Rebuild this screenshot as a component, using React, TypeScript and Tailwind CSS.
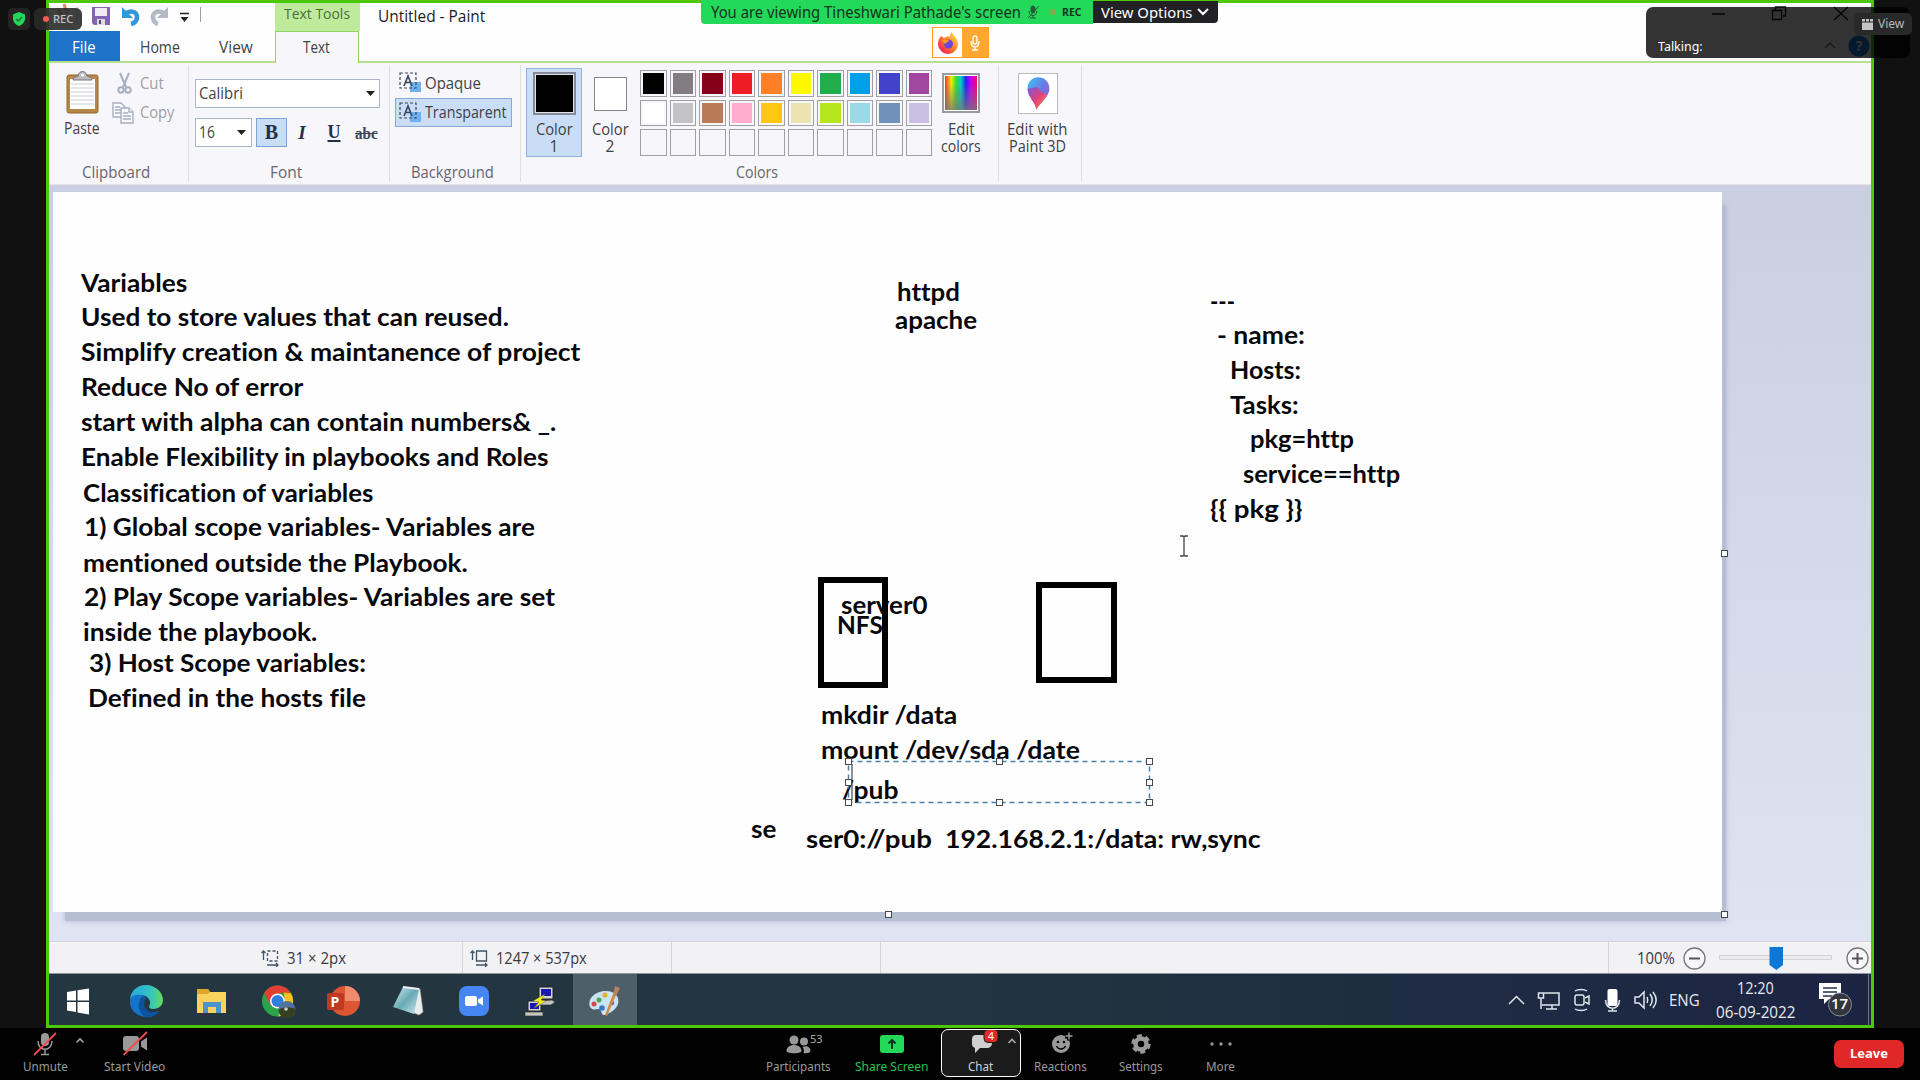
import React, { useLayoutEffect, useRef } from "react";

/* Text set to an exact width: the natural width is measured and scaled horizontally. */
function Fit({ w, className = "", inner = "", children }: { w: number; className?: string; inner?: string; children: React.ReactNode }) {
  const ref = useRef<HTMLSpanElement>(null);
  useLayoutEffect(() => {
    const el = ref.current;
    if (el) el.style.transform = `scaleX(${w / el.offsetWidth})`;
  }, [w]);
  return (
    <span className={`block shrink-0 ${className}`} style={{ width: w }}>
      <span ref={ref} className={`inline-block origin-left whitespace-pre ${inner}`}>
        {children}
      </span>
    </span>
  );
}

/* Canvas texts: left edge, right edge, baseline, content. */
const notes: [number, number, number, string][] = [
  [81, 187, 292, "Variables"],
  [81, 509, 326, "Used to store values that can reused."],
  [81, 580, 361, "Simplify creation & maintanence of project"],
  [81, 303, 396, "Reduce No of error"],
  [81, 556, 431, "start with alpha can contain numbers& _."],
  [81, 548, 466, "Enable Flexibility in playbooks and Roles"],
  [83, 374, 502, "Classification of variables"],
  [84, 535, 536, "1) Global scope variables- Variables are"],
  [83, 468, 572, "mentioned outside the Playbook."],
  [84, 555, 606, "2) Play Scope variables- Variables are set"],
  [83, 317, 641, "inside the playbook."],
  [89, 366, 672, "3) Host Scope variables:"],
  [88, 366, 707, "Defined in the hosts file"],
  [897, 960, 301, "httpd"],
  [895, 977, 329, "apache"],
  [1210, 1235, 310, "---"],
  [1217, 1305, 344, "- name:"],
  [1230, 1301, 379, "Hosts:"],
  [1230, 1299, 414, "Tasks:"],
  [1250, 1354, 448, "pkg=http"],
  [1243, 1400, 483, "service==http"],
  [1210, 1303, 518, "{{ pkg }}"],
  [841, 928, 614, "server0"],
  [837, 883, 634, "NFS"],
  [821, 957, 724, "mkdir /data"],
  [821, 1080, 759, "mount /dev/sda /date"],
  [842, 898, 799, "/pub"],
  [751, 776, 838, "se"],
  [806, 932, 848, "ser0://pub"],
  [945, 1261, 848, "192.168.2.1:/data: rw,sync"],
];

const handles: [number, number][] = [
  [848, 761], [999, 761], [1149, 761], [848, 782], [1149, 782], [848, 802], [999, 802], [1149, 802],
  [1724, 553], [1724, 914], [888, 914],
];

const palette = [
  "#000000", "#827d82", "#87001a", "#ee1c24", "#ff7f27", "#fbf800", "#22ad4c", "#00a0e8", "#4143cc", "#a2479f",
  "#ffffff", "#c3c2c5", "#b97a57", "#ffadca", "#ffc710", "#ece4b0", "#b5e61d", "#9adae6", "#7092ba", "#c9bfe5",
  "", "", "", "", "", "", "", "", "", "",
];

function TitleBar() {
  return (
    <div className="flex h-[28px] w-full items-start text-[#1c1c20]">
      <svg className="ml-[3px] h-7 w-[160px] shrink-0" viewBox="52 3 160 28">
        <path d="M64 4l3 10M58 9l4 6" stroke="#d98a66" strokeWidth="3" />
        <path d="M77 7v15M200.500 7v15" stroke="#a0a0a4" />
        <path d="M92 7h18v18H94l-2-2z" fill="#8263b4" />
        <path d="M95 8h12v8H95z" fill="#f0ebf5" />
        <path d="M97 19h8v6h-8z" fill="#ddd" />
        <path d="M99 20h2v4h-2z" fill="#54427c" />
        <path d="M126 13c6-3 11-1 11 4 0 4-2 6-6 7" fill="none" stroke="#3098d8" strokeWidth="4.500" />
        <path d="M122 7v11h11z" fill="#3098d8" />
        <path d="M164 13c-6-3-11-1-11 4 0 4 2 6 5 7" fill="none" stroke="#b3bac6" strokeWidth="4.500" />
        <path d="M168 7v11h-11z" fill="#b3bac6" />
        <path d="M180 13.500h9" stroke="#222" strokeWidth="1.500" />
        <path d="M180.500 17h8l-4 5z" fill="#222" />
      </svg>
      <div className="ml-[63px] flex h-7 w-[85px] bg-[#bfe99b]">
        <Fit w={66} className="ml-[9px] text-[15px] leading-[21px] text-[#4b7038]">Text Tools</Fit>
      </div>
      <Fit w={107} className="ml-[18px] text-[16px] leading-[26px]">Untitled - Paint</Fit>
      <svg className="ml-[1225px] h-5 w-[142px] shrink-0" viewBox="1710 3 142 20" fill="none" stroke="#111" strokeWidth="1.300">
        <path d="M1712 14h13M1834 7l14 13m0-13l-14 13M1772.500 10.500h9v9h-9zM1775.500 10V7h10v9h-3" />
      </svg>
    </div>
  );
}

function Tabs() {
  return (
    <div className="flex h-[32px] w-full text-[15.500px] leading-[32px] text-[#404046]">
      <div className="flex w-[71px] border-b-2 border-[#b6e08f] bg-[#1c73c8] text-white">
        <Fit w={24} className="ml-[23px]">File</Fit>
      </div>
      <div className="flex w-[155px] border-b-2 border-[#b6e08f]">
        <Fit w={40} className="ml-[20px]">Home</Fit>
        <Fit w={34} className="ml-[39px]">View</Fit>
      </div>
      <div className="flex w-[84px] border-x border-t border-[#93d45f] bg-[#f7f6fa]">
        <Fit w={27} className="ml-[27px] -mt-px">Text</Fit>
      </div>
      <div className="flex flex-1 items-center border-b-2 border-[#b6e08f]">
        <svg className="ml-auto h-6 w-[48px]" viewBox="0 0 48 24">
          <path d="M2 14l5-5 5 5" stroke="#888" strokeWidth="1.500" fill="none" />
          <circle cx="36" cy="12" r="10.500" fill="#0d7fe4" />
          <text x="36" y="17" textAnchor="middle" fontSize="14" fontWeight="700" fill="#fff">?</text>
        </svg>
      </div>
    </div>
  );
}

function Group({ label, lw, className, children }: { label: string; lw: number; className: string; children: React.ReactNode }) {
  return (
    <div className={`my-[2px] flex shrink-0 flex-col border-r border-[#e0dfe4] ${className}`}>
      <div className="flex h-[99px]">{children}</div>
      <Fit w={lw} className="mx-auto -translate-x-[3px] text-[15.500px] leading-[19px] text-[#67666c]">{label}</Fit>
    </div>
  );
}

const Select = () => (
  <svg className="h-[22px] w-[22px] shrink-0" viewBox="0 0 22 22">
    <path d="M11 10h11v10H11z" fill="#6fb2f3" />
    <path d="M1 1h16v15H1z" fill="none" stroke="#39485c" strokeWidth="1.200" strokeDasharray="3 2" />
    <path d="M5 14l4-10 4 10M6.500 10.500h5" fill="none" stroke="#39485c" strokeWidth="1.600" />
  </svg>
);
const Arrow = () => <svg className="h-[5px] w-[9px] shrink-0" viewBox="0 0 9 5"><path d="M0 0h9L4.500 5z" fill="#222" /></svg>;

function Ribbon() {
  return (
    <div className="flex h-[122px] w-full border-b border-[#e4e3ea] bg-[#f7f6fa] text-[15.500px] leading-[17px] text-[#3f3f46]">
      <Group label="Clipboard" lw={68} className="w-[140px]">
        <div className="ml-[15px] w-[36px] pt-[6px]">
          <svg className="ml-[2px] h-[43px] w-[33px]" viewBox="0 0 33 43">
            <rect x="1" y="4" width="31" height="38" rx="2" fill="#b78649" stroke="#92672f" />
            <path d="M4 8h25v30H4z" fill="#fff" />
            <path d="M5 13h23M5 17h23M5 21h23M5 25h23M5 29h23M5 33h23" stroke="#c4cbd7" />
            <path d="M7 9c1-4 4-3 5-4 1-6 8-6 9 0 1 1 4 0 5 4z" fill="#bdbac0" stroke="#77747a" />
            <circle cx="16.500" cy="4" r="1.500" fill="#fff" />
          </svg>
          <Fit w={36} className="mt-[6px]">Paste</Fit>
        </div>
        <div className="ml-[12px] pt-[6px] text-[#a09fa5]">
          <div className="flex h-[24px] items-center">
            <svg className="h-[22px] w-[24px]" viewBox="0 0 24 22" fill="none" stroke="#a5afc0" strokeWidth="2">
              <path d="M8 1l6 14M17 1l-6 14" /><circle cx="9" cy="18" r="2.700" /><circle cx="16" cy="18" r="2.700" />
            </svg>
            <Fit w={24} className="ml-[4px]">Cut</Fit>
          </div>
          <div className="mt-[6px] flex h-[24px] items-center">
            <svg className="h-[22px] w-[24px]" viewBox="0 0 24 22" fill="#fbfbfd" stroke="#a5afc0" strokeWidth="1.400">
              <path d="M1 1h8l4 4v10H1z" /><path d="M3 5h5M3 8h8M3 11h8" />
              <path d="M9 6h8l4 4v11H9z" /><path d="M17 6v4h4M11 11h5M11 14h8M11 17h8" />
            </svg>
            <Fit w={34} className="ml-[4px] -mt-px">Copy</Fit>
          </div>
        </div>
      </Group>
      <Group label="Font" lw={32} className="w-[201px]">
        <div className="ml-[6px] pt-[14px]">
          <div className="flex h-[29px] w-[185px] items-center border border-[#abb4c8] bg-white">
            <Fit w={44} className="ml-[3px]">Calibri</Fit>
            <span className="ml-auto mr-[4px]"><Arrow /></span>
          </div>
          <div className="mt-[10px] flex">
            <div className="flex h-[29px] w-[57px] items-center border border-[#abb4c8] bg-white">
              <Fit w={16} className="ml-[3px]">16</Fit>
              <span className="ml-auto mr-[5px]"><Arrow /></span>
            </div>
            <div className="ml-[4px] grid h-[29px] w-[31px] place-items-center border border-[#7aa3d4] bg-[#c9ddf6] font-['Liberation_Serif'] text-[20px] font-bold text-[#243045]">B</div>
            <div className="grid w-[30px] place-items-center font-['Liberation_Serif'] text-[19px] font-bold italic text-[#243045]">I</div>
            <div className="grid w-[34px] place-items-center font-['Liberation_Serif'] text-[18px] font-bold text-[#243045] underline decoration-2 underline-offset-2">U</div>
            <Fit w={23} inner="line-through" className="ml-[4px] pt-[7px] font-['Liberation_Serif'] text-[17px] font-bold text-[#3e4656]">abc</Fit>
          </div>
        </div>
      </Group>
      <Group label="Background" lw={83} className="w-[131px]">
        <div className="ml-[5px] pt-[3px]">
          <div className="flex h-[30px] items-center pl-[4px]">
            <Select /><Fit w={56} className="ml-[4px]">Opaque</Fit>
          </div>
          <div className="flex h-[29px] w-[117px] items-center border border-[#86a9d6] bg-[#c9ddf6] pl-[3px]">
            <Select /><Fit w={82} className="ml-[4px] -mt-px">Transparent</Fit>
          </div>
        </div>
      </Group>
      <Group label="Colors" lw={42} className="w-[478px]">
        <div className="ml-[5px] mt-[3px] flex h-[89px] w-[56px] flex-col items-center border border-[#8fb3dc] bg-[#c9ddf6] pt-[3px]">
          <div className="h-[43px] w-[43px] border-2 border-[#858b97] bg-[#dfe5ee] p-px">
            <div className="h-full w-full bg-black" />
          </div>
          <Fit w={37} className="mt-[6px]">Color</Fit><span>1</span>
        </div>
        <div className="ml-[9px] flex w-[38px] flex-col items-center pt-[12px]">
          <div className="h-[34px] w-[33px] border border-[#85858a] bg-white" />
          <Fit w={37} className="mt-[10px]">Color</Fit><span>2</span>
        </div>
        <div className="ml-[11px] mt-[5px] grid h-[86px] w-[292px] grid-cols-10 gap-x-[3px] gap-y-[3px]">
          {palette.map((c, i) => (
            <div key={i} className="border border-[#a09fa4] p-[2px]">
              <div className="h-full w-full" style={{ backgroundColor: c }} />
            </div>
          ))}
        </div>
        <div className="ml-[8px] flex w-[42px] flex-col items-center pt-[8px]">
          <div className="h-[40px] w-[38px] border-2 border-[#9a9aa2] bg-white p-px">
            <div className="h-full w-full bg-[linear-gradient(to_bottom,transparent_20%,#777c),linear-gradient(to_right,#e33,#ee0_20%,#3d3_35%,#0cc_50%,#22e_65%,#b0f_80%,#f06)]" />
          </div>
          <Fit w={27} className="mt-[8px]">Edit</Fit><Fit w={40}>colors</Fit>
        </div>
      </Group>
      <div className="my-[2px] w-[83px] border-r border-[#e0dfe4]">
        <div className="flex w-[77px] flex-col items-center pt-[8px]">
          <svg className="h-[41px] w-[40px] border border-[#bbb] bg-white" viewBox="0 0 40 40">
            <defs>
              <linearGradient id="p3" x1="0" y1="0" x2="1" y2="1"><stop offset="0" stopColor="#39c6f5" /><stop offset=".5" stopColor="#6a78e4" /><stop offset="1" stopColor="#c34ac0" /></linearGradient>
              <linearGradient id="p4" x1="0" y1="0" x2="1" y2="1"><stop offset="0" stopColor="#7a5be0" /><stop offset=".5" stopColor="#e3407a" /><stop offset="1" stopColor="#f79a2f" /></linearGradient>
            </defs>
            <path d="M20 3c7 0 12 5 12 12 0 8-9 14-14 22 1-7-9-13-9-22 0-7 5-12 11-12z" fill="url(#p3)" />
            <path d="M9 15c6 0 9-4 13 1 2 4 5 5 8 5-3 6-9 11-12 16 0-7-9-13-9-22z" fill="url(#p4)" />
          </svg>
          <Fit w={61} className="mt-[7px]">Edit with</Fit><Fit w={57}>Paint 3D</Fit>
        </div>
      </div>
    </div>
  );
}

/* The drawing surface: everything on it sits at its own free position. */
function Workspace() {
  return (
    <div className="relative h-[756px] w-full overflow-hidden bg-gradient-to-b from-[#c9cfe0] to-[#dfe4f2]">
      <div className="absolute left-[16px] top-[20px] h-[716px] w-[1661px] bg-[#b5bed3] shadow-[0_0_5px_#b0b9d0]" />
      <div className="absolute left-[4px] top-[7px] h-[720px] w-[1669px] bg-[#fefefe]" />
      <div className="absolute -left-[49px] -top-[185px] h-[1000px] w-[1900px] font-[Lato] text-[25px] font-bold leading-[30px] text-[#08080c] [font-variant-ligatures:none]">
        {notes.map(([x, r, b, t]) => (
          <div key={t} className="absolute" style={{ left: x, top: b - 25 }}>
            <Fit w={r - x}>{t}</Fit>
          </div>
        ))}
        <div className="absolute left-[818px] top-[577px] h-[111px] w-[70px] border-[6px] border-black" />
        <div className="absolute left-[1036px] top-[582px] h-[101px] w-[81px] border-[6px] border-black" />
        <svg className="absolute left-[840px] top-[750px] h-[60px] w-[320px]" viewBox="840 750 320 60">
          <path d="M848.500 761.500h301v41h-301z" fill="none" stroke="#4a80a4" strokeWidth="1.500" strokeDasharray="5 4" />
          <path d="M852 764v36" stroke="#222" />
        </svg>
        {handles.map(([x, y]) => (
          <div key={`${x}-${y}`} className="absolute h-[7px] w-[7px] border border-[#45484f] bg-white" style={{ left: x - 3, top: y - 3 }} />
        ))}
        <svg className="absolute left-[1178px] top-[534px] h-[24px] w-[12px]" viewBox="0 0 12 24" fill="none" stroke="#444" strokeWidth="1.300">
          <path d="M2 2h3l1 1 1-1h3M2 22h3l1-1 1 1h3M6 3v18" />
        </svg>
      </div>
    </div>
  );
}

function StatusBar() {
  return (
    <div className="flex h-[33px] w-full items-center border-b border-t border-b-[#8d959c] border-t-[#d8d7dc] bg-[#f2f1f4] text-[16px] leading-[20px] text-[#39393f]">
      <svg className="ml-[212px] h-[18px] w-[18px]" viewBox="0 0 18 18" fill="none" stroke="#41566b" strokeWidth="1.300">
        <path d="M2.500 11V2M.5 4l2-2 2 2M6 16h11M15 14l2 2-2 2" /><path d="M6.500 2h10v10h-10z" strokeDasharray="3 2" />
      </svg>
      <Fit w={59} className="ml-[8px]">31 × 2px</Fit>
      <div className="ml-[116px] h-[31px] w-px bg-[#d5d4d9]" />
      <svg className="ml-[7px] h-[18px] w-[18px]" viewBox="0 0 18 18" fill="none" stroke="#41566b" strokeWidth="1.300">
        <path d="M2.500 11V2M.5 4l2-2 2 2M6 16h11M15 14l2 2-2 2M6.500 2h10v10h-10z" />
      </svg>
      <Fit w={91} className="ml-[8px]">1247 × 537px</Fit>
      <div className="ml-[84px] h-[31px] w-px bg-[#d5d4d9]" />
      <div className="ml-[208px] h-[31px] w-px bg-[#d5d4d9]" />
      <div className="ml-auto h-[31px] w-px bg-[#d5d4d9]" />
      <Fit w={38} className="ml-[28px]">100%</Fit>
      <svg className="ml-[8px] h-[30px] w-[188px]" viewBox="1683 943 188 30" fill="none" stroke="#77777c" strokeWidth="1.300">
        <circle cx="1694.500" cy="958.500" r="10.500" fill="#f8f8fa" />
        <circle cx="1857.500" cy="958.500" r="10.500" fill="#f8f8fa" />
        <path d="M1689 958.500h11M1852 958.500h11M1857.500 953v11" stroke="#55555a" strokeWidth="2" />
        <path d="M1719.500 955.500h112v4h-112z" stroke="#d3d2d7" strokeWidth="1" fill="#eceaef" />
        <path d="M1769.500 947h13.500v18l-6.700 5-6.800-5z" fill="#0b78d8" stroke="none" />
      </svg>
    </div>
  );
}

function TaskIcons() {
  return (
    <svg className="h-[51px] w-[600px] shrink-0" viewBox="49 974 600 51">
      <defs>
        <linearGradient id="ed" x1="0" y1="0" x2="1" y2="0"><stop offset="0" stopColor="#2aa7dd" /><stop offset=".6" stopColor="#32c3c4" /><stop offset="1" stopColor="#65dc5a" /></linearGradient>
        <linearGradient id="np" x1="0" y1="0" x2="1" y2="1"><stop offset="0" stopColor="#d8eef2" /><stop offset=".5" stopColor="#68a9b6" /><stop offset="1" stopColor="#d0e7eb" /></linearGradient>
      </defs>
      <path d="M573 974h64v51h-64z" fill="#4e5f6a" />
      <path d="M67 992l9-1.500v10H67zM77.500 990.200L89 988.500v12H77.500zM67 1002h9v10l-9-1.500zM77.500 1002H89v12.500l-11.500-2z" fill="#fff" />
      <path d="M130 1001c0-10 7-16 16-16s17 7 17 15c0 6-5 9-10 9-5 0-4-3-3-5 1-5-4-9-9-9-6 0-11 3-11 6z" fill="url(#ed)" />
      <path d="M130 1000c2-6 12-7 16-2-6 1-6 8-2 12 4 3 10 3 15 1-3 4-8 7-14 6-9-1-16-8-15-17z" fill="#1574ca" />
      <path d="M141 998c-4 5-3 14 4 19 6 1 12-3 14-6-10 4-19-3-13-13-2-2-4-1-5 0z" fill="#0c529f" />
      <path d="M197 989h11l2 3h16v21h-29z" fill="#fbd25e" />
      <path d="M197 989h11l2 3-2 2h-11z" fill="#e0a52c" />
      <path d="M203 1013v-11h18v11h-5v-6h-8v6z" fill="#4b93cc" />
      <circle cx="277.500" cy="1001" r="15.500" fill="#2ba24c" />
      <path d="M264.100 993.200a15.500 15.500 0 0 1 26.800 0h-13l-7 12z" fill="#e23e31" />
      <path d="M291 993.200a15.500 15.500 0 0 1-13 23.300l7-12-1-12z" fill="#fbc21b" />
      <circle cx="277.500" cy="1001" r="7.500" fill="#fff" /><circle cx="277.500" cy="1001" r="6" fill="#2f7de0" />
      <circle cx="287" cy="1009.500" r="8.500" fill="#54719a" />
      <path d="M278.500 1010c4-4 13-3 17-1 0 5-4 9.500-8.500 9.500s-8-4-8.500-8.500z" fill="#344020" />
      <circle cx="286" cy="1009" r="1.800" fill="#c9d1d4" />
      <circle cx="345" cy="1001" r="15" fill="#dd5634" /><path d="M345 986a15 15 0 0 1 15 15h-15z" fill="#f08b6d" />
      <rect x="327" y="993" width="17" height="17" rx="2" fill="#bf3a22" />
      <text x="335" y="1006.500" fontSize="14" fontWeight="700" fill="#fff" textAnchor="middle">P</text>
      <path d="M403 987l17 2 3 23-4 3-5-2z" fill="#e6eef0" stroke="#c0a58a" strokeWidth=".6" />
      <path d="M403 987l16 2-5 25-21-7z" fill="url(#np)" />
      <path d="M403 987l16 2" stroke="#eee" strokeWidth="2" />
      <rect x="459" y="986" width="30" height="30" rx="8" fill="#4586f4" />
      <rect x="465" y="996" width="12" height="10" rx="2" fill="#fff" /><path d="M478 999.500l5-3v9l-5-3z" fill="#fff" />
      <path d="M539 987h14v12h-14zM528 1001h13v10h-13z" fill="#d5d5d0" stroke="#222" />
      <path d="M541 989h10v7h-10zM530 1003h9v6h-9z" fill="#1717b8" />
      <path d="M538 1001l14-1 3 2-4 3h-12zM525 1012h18v4h-18z" fill="#c5c5c0" stroke="#333" strokeWidth=".7" />
      <path d="M545 994l-12 7 6 1-5 6 12-7-5-1z" fill="#f4ee1d" stroke="#554" strokeWidth=".4" />
      <path d="M590 1007c-3-9 6-16 16-16 9 0 14 6 12 13-2 6-8 9-13 11-4 1-3-5-6-6-3 0-6 2-9-2z" fill="#cbe4f3" />
      <circle cx="599" cy="1000" r="2.500" fill="#4aa456" /><circle cx="605" cy="995" r="2.500" fill="#e5b02e" /><circle cx="594" cy="1004" r="2.500" fill="#d8454d" /><circle cx="612" cy="1003" r="2.200" fill="#7956a5" />
      <circle cx="602" cy="1008" r="2.800" fill="#3c77c4" />
      <path d="M607 1016l-2-1 8-21 3 1z" fill="#d08a42" /><path d="M613 995l2-9 5 2-4 8z" fill="#b9825a" />
    </svg>
  );
}

function TaskBar() {
  return (
    <div className="flex h-[51px] w-full items-center bg-gradient-to-r from-[#243640] via-[#22343f] to-[#1c2444] text-[16px] leading-[24px] text-[#e6eaf1]">
      <TaskIcons />
      <svg className="ml-[855px] h-[30px] w-[158px] shrink-0" viewBox="1504 986 158 30" fill="none" stroke="#dfe5ec" strokeWidth="1.500">
        <path d="M1509 1005l7.500-7.500 7.500 7.500" />
        <path d="M1544 994h15v12h-17M1552 1006v4M1546 1010h11M1538.500 994h5v5h-5zM1541 999v11" />
        <rect x="1575" y="996" width="9" height="10" rx="2" /><path d="M1585 999l4-2v8l-4-2M1575 992c3-2 9-2 12 0M1575 1010c3 2 9 2 12 0" />
        <rect x="1607.500" y="990" width="10" height="17" rx="2" fill="#fff" stroke="none" /><path d="M1605.500 1001c0 11 14 11 14 0M1612.500 1009v3M1608 1012h9" />
        <path d="M1635 998h4l5-5v16l-5-5h-4zM1647 998c1 2 1 4 0 6M1650 995c3 4 3 8 0 12M1653 993c4 5 4 11 0 16" />
      </svg>
      <Fit w={31} className="ml-[7px]">ENG</Fit>
      <div className="ml-[15px] flex w-[80px] flex-col items-center">
        <Fit w={37}>12:20</Fit>
        <Fit w={79}>06-09-2022</Fit>
      </div>
      <svg className="ml-[23px] h-[36px] w-[36px]" viewBox="1818 989 36 36">
        <path d="M1819 990h22v16h-12l-5 5v-5h-5z" fill="#fff" />
        <path d="M1823 995h14M1823 999h14M1823 1003h9" stroke="#24304c" strokeWidth="1.300" />
        <circle cx="1840" cy="1011.500" r="11.500" fill="#33363f" stroke="#888c95" />
        <text x="1839.500" y="1015.500" fontSize="15" fontWeight="600" fill="#fff" textAnchor="middle">17</text>
      </svg>
      <div className="ml-auto mr-[2px] h-full w-px bg-[#6a7286]" />
    </div>
  );
}

function Overlays() {
  return (
    <>
      <div className="absolute left-[8px] top-[8px] grid h-[22px] w-[22px] place-items-center rounded-[5px] bg-[#242424]">
        <svg className="h-[14px] w-[14px]" viewBox="0 0 14 14"><path d="M7 0l6 2.500v4C13 10 10 13 7 14 4 13 1 10 1 6.500v-4z" fill="#23d959" /><path d="M4 7l2.300 2L10 5" stroke="#173" strokeWidth="1.400" fill="none" /></svg>
      </div>
      <div className="absolute left-[34px] top-[8px] flex h-[22px] w-[48px] items-center rounded-[6px] bg-[#2a2a2ae6]">
        <span className="ml-[9px] h-[6px] w-[6px] rounded-full bg-[#f95c52]" />
        <Fit w={20} className="ml-[4px] text-[10px] font-medium text-[#c5c5c5]">REC</Fit>
      </div>
      <div className="absolute left-[701px] top-0 flex h-[24px] items-center rounded-bl-[4px] bg-[#23d959] text-[#17321f]">
        <Fit w={310} className="ml-[10px] text-[15.500px] leading-[26px]">You are viewing Tineshwari Pathade's screen</Fit>
        <svg className="ml-[5px] h-[14px] w-[14px]" viewBox="0 0 14 14" fill="none" stroke="#265c37"><rect x="5" y="1" width="4" height="7" rx="2" fill="#265c37" /><path d="M3 6c0 6 8 6 8 0M7 10v3M4 13h6M2 13L13 1" /></svg>
        <span className="ml-[10px] h-[6px] w-[6px] rounded-full bg-[#8aa64b]" />
        <Fit w={20} className="ml-[6px] mr-[11px] mt-px text-[10px] font-bold">REC</Fit>
      </div>
      <div className="absolute left-[1093px] top-px flex h-[22px] w-[125px] items-center rounded-br-[4px] bg-[#222226] text-white">
        <Fit w={91} className="ml-[8px] text-[15px] leading-[23px]">View Options</Fit>
        <svg className="ml-[5px] h-[8px] w-[12px]" viewBox="0 0 12 8"><path d="M1 1l5 5 5-5" stroke="#fff" strokeWidth="2" fill="none" /></svg>
      </div>
      <div className="absolute left-[932px] top-[27px] flex h-[31px] w-[57px] border border-[#ff9d1e] bg-white">
        <svg className="ml-[4px] mt-[4px] h-[22px] w-[22px]" viewBox="0 0 22 22">
          <defs><linearGradient id="ff" x1="1" y1="0" x2="0" y2="1"><stop offset="0" stopColor="#fff24a" /><stop offset=".45" stopColor="#ff8a26" /><stop offset=".8" stopColor="#f8304d" /><stop offset="1" stopColor="#e01490" /></linearGradient></defs>
          <path d="M4 4l3 2c1-1 4-2 6-1 0-2 0-4 2-5 1 4 6 6 6 12 0 6-5 10-10 10S1 17 1 12c0-3 1-6 3-8z" fill="url(#ff)" />
          <circle cx="11.500" cy="12" r="4.500" fill="#6a45d8" /><path d="M5 8c3-1 5 0 8 1-2 0-3 1-5 3z" fill="#ff9a26" />
        </svg>
        <div className="ml-auto grid h-full w-[26px] place-items-center bg-[#ffa72f]">
          <svg className="h-[16px] w-[12px]" viewBox="0 0 12 16" fill="none" stroke="#fff" strokeWidth="1.300"><rect x="4" y="1" width="4" height="8" rx="2" /><path d="M2 6c0 8 8 8 8 0M6 12v3M3 15h6" /></svg>
        </div>
      </div>
      <div className="absolute left-[1646px] top-[7px] flex h-[51px] w-[264px] rounded-[7px] bg-black/80 text-white">
        <Fit w={45} className="ml-[12px] mt-[29px] text-[13px] leading-[20px]">Talking:</Fit>
      </div>
      <div className="absolute left-[1854px] top-[13px] flex h-[22px] w-[58px] items-center rounded-[5px] bg-[#292929] text-[#b9b9b9]">
        <svg className="ml-[8px] h-[11px] w-[11px]" viewBox="0 0 11 11" fill="#c4c4c4"><path d="M0 0h3v2.500H0zM4 0h3v2.500H4zM8 0h3v2.500H8zM0 3.500h11v7.500H0z" /></svg>
        <Fit w={26} className="ml-[5px] text-[12px]">View</Fit>
      </div>
    </>
  );
}

function Tool({ label, w, className, children }: { label: string; w: number; className: string; children: React.ReactNode }) {
  return (
    <div className={`flex h-[49px] shrink-0 flex-col items-center ${className}`}>
      <svg className="h-[27px] w-[80px] shrink-0" viewBox="0 0 80 27">{children}</svg>
      <Fit w={w} className="text-[12.500px] leading-[21px]">{label}</Fit>
    </div>
  );
}

function MeetingBar() {
  return (
    <div className="flex h-[52px] w-full items-start bg-[#020202] pt-px text-[#999999]">
      <Tool label="Unmute" w={45} className="ml-[5px] w-[80px]">
        <rect x="36" y="4" width="8" height="13" rx="4" fill="#999" />
        <path d="M33 12c0 11 14 11 14 0M40 20v5M36 25.500h8" stroke="#999" strokeWidth="1.500" fill="none" />
        <path d="M29 26L51 4" stroke="#ef4b4b" strokeWidth="1.800" />
        <path d="M71.500 13.500l3.500-3.500 3.500 3.500" stroke="#aaa" strokeWidth="1.600" fill="none" />
      </Tool>
      <Tool label="Start Video" w={61} className="ml-[9px] w-[80px]">
        <rect x="29" y="7" width="16" height="15" rx="3" fill="#999" /><path d="M47 12.500l6-4v13l-6-4z" fill="#999" />
        <path d="M29.500 26L53 3" stroke="#ef4b4b" strokeWidth="1.800" />
      </Tool>
      <Tool label="Participants" w={65} className="ml-[584px] w-[80px]">
        <circle cx="36" cy="11" r="4.500" fill="#999" /><circle cx="46" cy="12.500" r="4" fill="#999" />
        <path d="M28.500 22c0-8 15-8 15 0 0 3-15 3-15 0zM44.500 18c4-2 8 0 8 4 0 2-4 2.500-7 2 1-2 0-5-1-6z" fill="#999" />
        <text x="52" y="14" fontSize="11" fill="#aaa">53</text>
      </Tool>
      <Tool label="Share Screen" w={73} className="ml-[13px] w-[81px] text-[#23c552]">
        <rect x="28" y="6" width="24" height="18" rx="3" fill="#23d959" /><path d="M40 20v-9M36.500 14.500L40 11l3.500 3.500" stroke="#032" strokeWidth="2" fill="none" />
      </Tool>
      <div className="ml-[9px] h-[48px] w-[80px] overflow-hidden rounded-[7px] border border-white bg-[#1b1b1b] text-[#d2d2d2]">
        <Tool label="Chat" w={25} className="-mt-px w-[77px]">
          <path d="M35 6h11c3 0 5 2 5 4v4c0 3-2 5-5 5h-7l-5 5v-5c-2-1-3-2-3-4v-5c0-2 1-4 4-4z" fill="#cfcfcf" />
          <rect x="43" y="0.500" width="14" height="13" rx="4" fill="#e02828" stroke="#1b1b1b" />
          <text x="50" y="11" fontSize="11" textAnchor="middle" fill="#fff">4</text>
          <path d="M67.500 14l3.500-3.500 3.500 3.500" stroke="#aaa" strokeWidth="1.600" fill="none" />
        </Tool>
      </div>
      <Tool label="Reactions" w={53} className="w-[79px]">
        <circle cx="40" cy="15" r="9" fill="#999" /><circle cx="37" cy="13" r="1.300" /><circle cx="43" cy="13" r="1.300" /><path d="M35.500 17c2 4 7 4 9 0" stroke="#000" strokeWidth="1.500" fill="none" />
        <path d="M48 3.500v8M44 7.500h8" stroke="#000" strokeWidth="4" /><path d="M48 3.500v7M44.500 7h7" stroke="#999" strokeWidth="1.500" />
      </Tool>
      <Tool label="Settings" w={44} className="w-[81px]">
        <circle cx="40" cy="15" r="5.500" fill="none" stroke="#999" strokeWidth="4.500" /><circle cx="40" cy="15" r="8.300" fill="none" stroke="#999" strokeWidth="2.800" strokeDasharray="5 3.690" />
      </Tool>
      <Tool label="More" w={29} className="w-[79px]">
        <circle cx="31" cy="15" r="1.700" fill="#999" /><circle cx="40" cy="15" r="1.700" fill="#999" /><circle cx="49" cy="15" r="1.700" fill="#999" />
      </Tool>
      <div className="ml-auto mr-[16px] mt-[11px] flex h-[28px] w-[70px] items-center justify-center rounded-[7px] bg-[#e02828] text-[13px] font-bold text-white">
        <Fit w={38}>Leave</Fit>
      </div>
    </div>
  );
}

export default function App() {
  return (
    <div className="relative h-[1080px] w-[1920px] overflow-hidden bg-[#111111] font-['Noto_Sans','Open_Sans',sans-serif]">
      <div className="mx-[46px] flex h-[1028px] w-[1828px] flex-col border-[3px] border-[#4cc70a] bg-[#fefefe] font-['Open_Sans','Noto_Sans',sans-serif]">
        <TitleBar />
        <Tabs />
        <Ribbon />
        <Workspace />
        <StatusBar />
        <TaskBar />
      </div>
      <MeetingBar />
      <Overlays />
    </div>
  );
}
